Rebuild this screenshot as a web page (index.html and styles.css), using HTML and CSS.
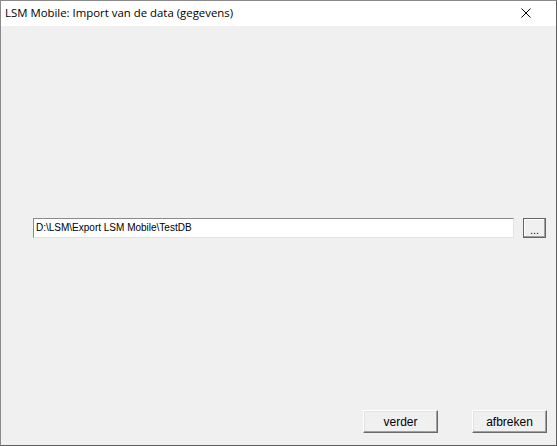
FILE: index.html
```html
<!DOCTYPE html>
<html>
<head>
<meta charset="utf-8">
<link rel="stylesheet" href="styles.css">
</head>
<body>
<div class="window">
  <div class="titlebar">
    <span class="title">LSM Mobile: Import van de data (gegevens)</span>
    <svg class="close" width="10" height="10" viewBox="0 0 10 10"><path d="M0.5 0.5 L9.5 9.5 M9.5 0.5 L0.5 9.5" stroke="#000" stroke-width="1"/></svg>
  </div>
  <div class="content">
    <div class="path-row">
      <div class="input">D:\LSM\Export LSM Mobile\TestDB</div>
      <div class="btn browse">...</div>
    </div>
    <div class="actions">
      <div class="btn action">verder</div>
      <div class="btn action">afbreken</div>
    </div>
  </div>
</div>
</body>
</html>
```
FILE: styles.css
```css
html, body {
  margin: 0;
  padding: 0;
  background: #f0f0f0;
}
.window {
  width: 557px;
  height: 446px;
  box-sizing: border-box;
  border: 1px solid #8a8a8a;
  border-right-color: #5e5e5e;
  border-bottom-color: #5e5e5e;
  display: flex;
  flex-direction: column;
  background: #f0f0f0;
}
.titlebar {
  height: 25px;
  background: #ffffff;
  display: flex;
  align-items: center;
  justify-content: space-between;
  padding: 0 25px 0 4px;
  flex: none;
}
.title {
  font-family: "Open Sans", "Noto Sans", sans-serif;
  font-size: 11.4px;
  color: #000;
  position: relative;
  top: -1px;
}
.close {
  display: block;
  position: relative;
  top: -1px;
}
.content {
  flex: 1;
  display: flex;
  flex-direction: column;
  padding: 192px 0 0 32px;
}
.path-row {
  display: flex;
  align-items: stretch;
  height: 20px;
}
.input {
  width: 481px;
  box-sizing: border-box;
  background: #fff;
  border: 1px solid;
  border-color: #8a8a8a #e3e3e3 #e3e3e3 #8a8a8a;
  font-family: "Liberation Sans", Arial, sans-serif;
  font-size: 10px;
  line-height: 18px;
  padding-left: 2px;
  color: #000;
  white-space: nowrap;
}
.btn {
  box-sizing: border-box;
  background: #f0f0f0;
  font-family: "Liberation Sans", Arial, sans-serif;
  font-size: 11px;
  color: #000;
  text-align: center;
  display: flex;
  align-items: center;
  justify-content: center;
}
.browse {
  width: 23px;
  margin-left: 9px;
  border: 1px solid #646464;
  box-shadow: inset -1px -1px 0 #a0a0a0, inset 1px 1px 0 #ffffff;
  padding-top: 3px;
}
.actions {
  margin-top: auto;
  margin-bottom: 12px;
  display: flex;
  justify-content: flex-end;
  gap: 34px;
  padding-right: 9px;
}
.action {
  width: 75px;
  height: 23px;
  border-top: 1px solid #ffffff;
  border-left: 1px solid #ffffff;
  border-right: 1px solid #696969;
  border-bottom: 1px solid #696969;
  box-shadow: inset -1px -1px 0 #a0a0a0, inset 1px 1px 0 #e3e3e3;
  font-size: 12px;
}
```
